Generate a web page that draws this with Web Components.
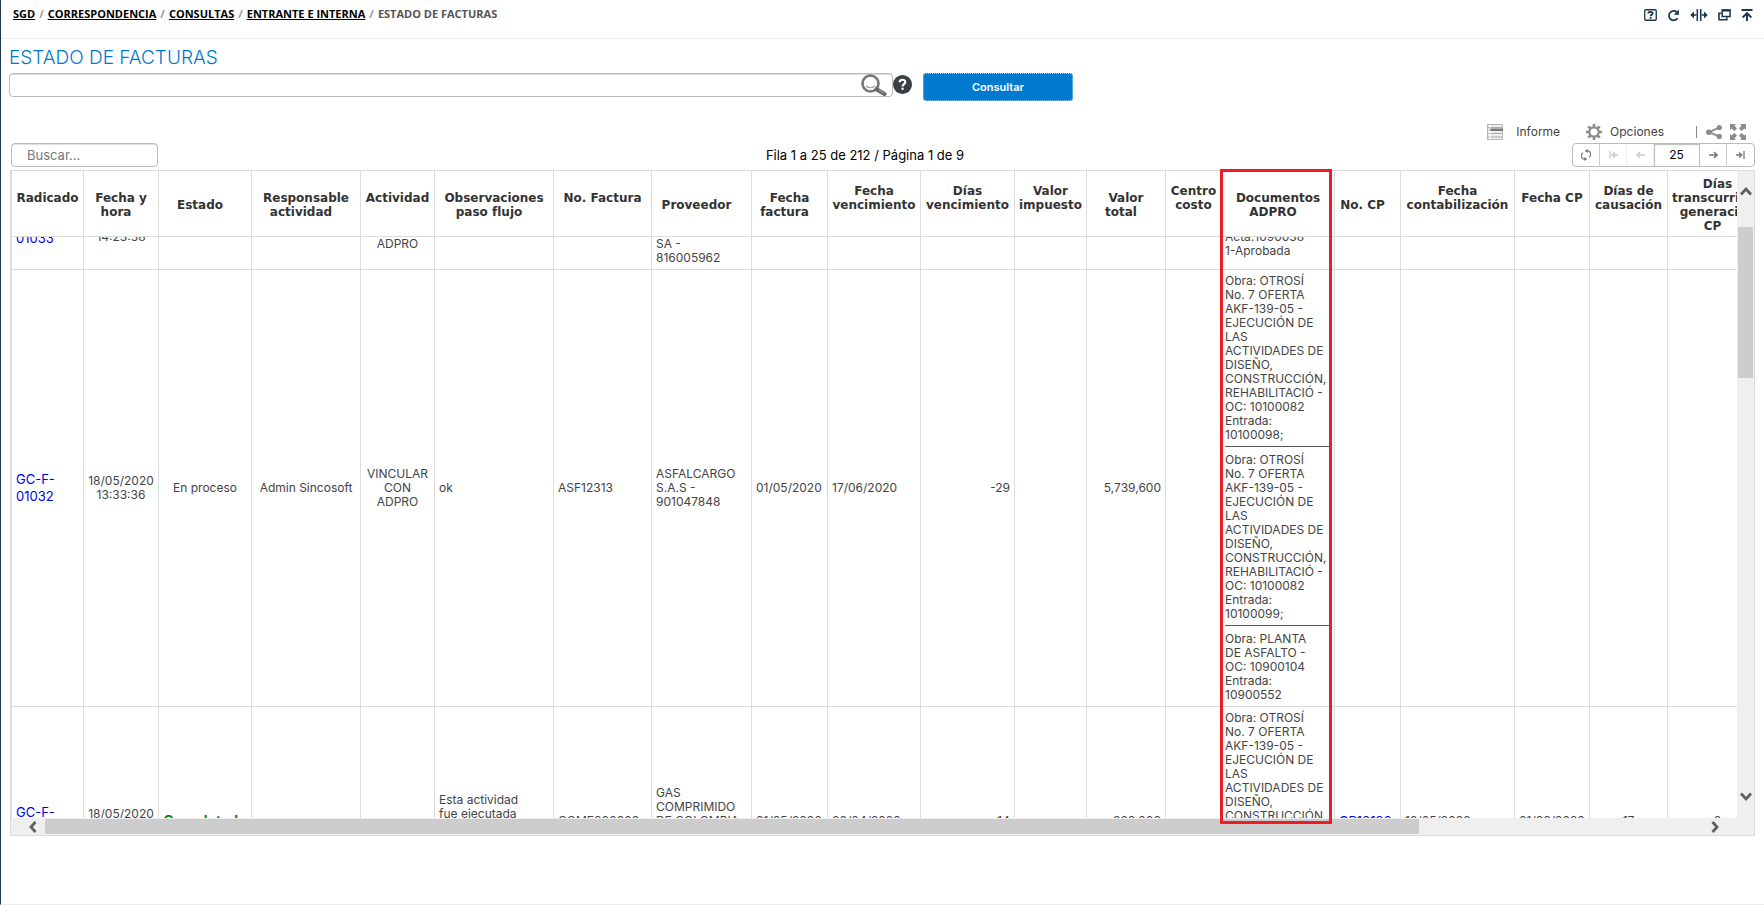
<!DOCTYPE html>
<html lang="es">
<head>
<meta charset="utf-8">
<title>Estado de facturas</title>
<style>
  body { margin: 0; background: #fff; color: #444; font: 12px/14px Inter, "Liberation Sans", sans-serif; }
</style>
</head>
<body>
<sgd-page>
  <sgd-topbar slot="top">
    <a href="#sgd">SGD</a>
    <a href="#correspondencia">CORRESPONDENCIA</a>
    <a href="#consultas">CONSULTAS</a>
    <a href="#entrante">ENTRANTE E INTERNA</a>
    <span>ESTADO DE FACTURAS</span>
  </sgd-topbar>
  <sgd-query>ESTADO DE FACTURAS</sgd-query>
  <sgd-report-tools></sgd-report-tools>
  <sgd-pager>Fila 1 a 25 de 212 / Página 1 de 9</sgd-pager>
  <sgd-grid></sgd-grid>
</sgd-page>

<script>
const ICONS = {
  ask: [13, 12, '<rect x=".75" y=".75" width="11.5" height="10.5" rx="1" fill="none" stroke="currentColor" stroke-width="1.3"/><path d="M4.2 4.5C4.3 2.4 8.7 2.4 8.7 4.4 8.7 5.7 6.5 5.7 6.5 7.2" fill="none" stroke="currentColor" stroke-width="1.7"/><path d="M5.6 8h1.9v1.7H5.6z"/>'],
  reload: [13, 13, '<path d="M10.6 9.2A4.7 4.7 0 1 1 9.7 3" fill="none" stroke="currentColor" stroke-width="1.8"/><path d="M11.9.6v5.1H6.8z"/>'],
  split: [18, 12, '<path d="M7.3 0v12M10.7 0v12" stroke="currentColor" stroke-width="1.5"/><path d="M6.5 5.2H4V2.6L.3 6 4 9.4V6.8h2.5zM11.5 5.2H14V2.6L17.7 6 14 9.4V6.8h-2.5z"/>'],
  windows: [13, 12, '<path d="M4.2 1h7.9v6.5H4.2z" fill="none" stroke="currentColor" stroke-width="1.5"/><path d="M4.2.3h8v2.200h-8z"/><path d="M3.5 4.2H1v6.6h7.8V8.2" fill="none" stroke="currentColor" stroke-width="1.6"/>'],
  top: [12, 12, '<path d="M.5 0h11v2H.5z"/><path d="M6 12V5M1.7 8.5 6 4.2l4.3 4.3" fill="none" stroke="currentColor" stroke-width="1.9"/>'],
  lens: [26, 22, '<circle cx="9.5" cy="9.5" r="8" fill="#fff" stroke="#777" stroke-width="2.6"/><path d="M5 12q4.500 3.500 9 0" fill="none" stroke="#999" stroke-width="1.2"/><path d="M15.500 15.200 23.500 20" stroke="#666" stroke-width="4" stroke-linecap="round"/><path d="M18 16.300l5 3" stroke="#aaa" stroke-width="1"/>'],
  help: [19, 19, '<circle cx="9.5" cy="9.5" r="9.500" fill="#3a3f42"/><path d="M6.600 7.300C6.700 3.800 12.400 4 12.300 7.100 12.300 9.100 9.600 9.100 9.600 11.500" fill="none" stroke="#fff" stroke-width="2.200"/><path d="M8.500 12.700h2.200v2.100H8.500z" fill="#fff"/>'],
  report: [16, 16, '<path d="M.5.5h15v15H.5z" fill="#eee" stroke="#b5b5b5"/><path d="M2 4.500h14v2.500H2z" fill="#777"/><path d="M1 3.500h14M1 9.500h14M1 13h14" stroke="#aaa"/><path d="M3 1v14" stroke="#fff"/>'],
  gear: [16, 16, '<circle cx="8" cy="8" r="4.700" fill="none" stroke="currentColor" stroke-width="2.200"/><path d="M8 0v3M8 13v3M0 8h3M13 8h3M2.300 2.300l2.200 2.200M11.500 11.500l2.200 2.200M2.300 13.700l2.200-2.200M11.500 4.500l2.200-2.200" stroke="currentColor" stroke-width="2.600"/>'],
  share: [16, 14, '<path d="M13 2.700 3 7.200l10 4.200" fill="none" stroke="currentColor" stroke-width="2"/><circle cx="2.800" cy="7.200" r="2.800"/><circle cx="13.300" cy="2.600" r="2.600"/><circle cx="13.300" cy="11.400" r="2.600"/>'],
  expand: [16, 16, '<path d="M0 0h6L4.500 1.500 7 4.500 4.500 7 1.500 4.500 0 6zM16 0v6l-1.500-1.500L11.500 7 9 4.500l2.500-3L10 0zM0 16v-6l1.500 1.500L4.500 9 7 11.500l-2.500 3L6 16zM16 16h-6l1.500-1.500-2.500-3L11.500 9l3 2.500L16 10z"/>'],
  sync: [10, 12, '<path d="M3.800 10.200H4.500A3.500 3.500 0 0 1 2 3.800M6.200 1.800H5.500A3.500 3.500 0 0 1 8 8.200" fill="none" stroke="currentColor" stroke-width="1.200"/><path d="M6.700 0 3.700 2l3 2zM3.300 8l3 2-3 2z"/>'],
  first: [9, 8, '<path d="M1 0v8" stroke="currentColor" stroke-width="1.300"/><path d="M9 4H3.500M6 1.500 3.300 4 6 6.500" fill="none" stroke="currentColor" stroke-width="1.500"/>'],
  prev: [9, 8, '<path d="M9 4H1.500M4 1 1 4l3 3" fill="none" stroke="currentColor" stroke-width="1.500"/>'],
  next: [9, 8, '<path d="M0 4h7.500M5 1l3 3-3 3" fill="none" stroke="currentColor" stroke-width="1.600"/>'],
  last: [9, 8, '<path d="M8 0v8" stroke="currentColor" stroke-width="1.300"/><path d="M0 4h5.500M3 1.500 5.700 4 3 6.500" fill="none" stroke="currentColor" stroke-width="1.500"/>'],
  up: [12, 10, '<path d="M1 8.500 6 3l5 5.500" fill="none" stroke="currentColor" stroke-width="2.800"/>'],
  down: [12, 10, '<path d="M1 1.500 6 7l5-5.500" fill="none" stroke="currentColor" stroke-width="2.800"/>'],
  left: [9, 12, '<path d="M7.500 1 3 6l4.500 5" fill="none" stroke="currentColor" stroke-width="2.800"/>'],
  right: [9, 12, '<path d="M1.500 1 6 6l-4.500 5" fill="none" stroke="currentColor" stroke-width="2.800"/>']
};
const icon = name => {
  const [w, h, body] = ICONS[name];
  return `<svg width="${w}" height="${h}" viewBox="0 0 ${w} ${h}" fill="currentColor" aria-hidden="true">${body}</svg>`;
};
const BASE = `<style>
  *, *::before, *::after { box-sizing: border-box; }
  button, input { font: inherit; color: inherit; margin: 0; }
  button { display: flex; align-items: center; justify-content: center; padding: 0; border: 0; background: none; cursor: pointer; }
  svg { display: block; flex: none; }
</style>`;
class Base extends HTMLElement {
  constructor() {
    super();
    this.attachShadow({ mode: 'open' }).innerHTML = BASE + this.view();
  }
}

customElements.define('sgd-page', class extends Base {
  view() { return `<style>
    :host { display: flex; flex-direction: column; box-sizing: border-box; min-height: 100vh; border-left: 1px solid #1c3550; border-bottom: 1px solid #ececec; }
    main { padding: 8px 8px 0 8px; }
  </style>
  <slot name="top"></slot><main><slot></slot></main>`; }
});

customElements.define('sgd-topbar', class extends Base {
  view() { return `<style>
    :host { display: flex; justify-content: space-between; align-items: flex-start; box-sizing: border-box; height: 39px; padding: 6px 11px 0 12px; border-bottom: 1px solid #ececec; }
    nav { display: flex; gap: 4px; font: bold 11px/16px "Open Sans", "Noto Sans", sans-serif; color: #999; white-space: nowrap; }
    ::slotted(a) { color: #000; }
    ::slotted(span) { color: #555; }
    .icons { display: flex; align-items: center; gap: 10px; height: 18px; color: #1c3550; }
  </style>
  <nav aria-label="Ruta"></nav>
  <div class="icons">
    <button aria-label="Ayuda">${icon('ask')}</button>
    <button aria-label="Actualizar">${icon('reload')}</button>
    <button aria-label="Ampliar">${icon('split')}</button>
    <button aria-label="Nueva ventana">${icon('windows')}</button>
    <button aria-label="Subir">${icon('top')}</button>
  </div>`; }
  connectedCallback() {
    const nav = this.shadowRoot.querySelector('nav');
    [...this.children].forEach((el, i) => {
      el.slot = 'step' + i;
      nav.insertAdjacentHTML('beforeend', `${i ? '<span>/</span>' : ''}<slot name="step${i}"></slot>`);
    });
  }
});

customElements.define('sgd-query', class extends Base {
  view() { return `<style>
    :host { display: block; }
    h1 { margin: 0 0 4px; font-size: 19px; font-weight: 300; line-height: 22px; color: #007acc; }
    form { display: flex; align-items: flex-start; }
    .field { position: relative; flex: 0 1 884px; }
    input { display: block; width: 100%; height: 24px; padding: 0 36px 0 8px; border: 1px solid #bbb; border-radius: 4px; box-shadow: inset 0 1px 1px #ddd; background: #fff; }
    .lens { position: absolute; right: 6px; top: 1px; }
    .help { margin: 2px 11px 0 0; }
    .go { width: 150px; height: 28px; border: 1px dotted #9fd0f2; border-radius: 3px; background: #007acf; color: #fff; font-size: 11px; font-weight: 600; }
  </style>
  <h1><slot></slot></h1>
  <form onsubmit="return false">
    <div class="field"><input type="text" aria-label="Criterios de consulta"><button type="button" class="lens" aria-label="Buscar">${icon('lens')}</button></div>
    <button type="button" class="help" aria-label="Ayuda">${icon('help')}</button>
    <button class="go">Consultar</button>
  </form>`; }
});

customElements.define('sgd-report-tools', class extends Base {
  view() { return `<style>
    :host { display: flex; justify-content: flex-end; align-items: center; height: 16px; margin: 23px 10px 3px 0; color: #8c8c8c; }
    button span { color: #444; }
    .report { gap: 13px; margin-right: 26px; }
    .options { gap: 8px; margin-right: 32px; }
    i { width: 1px; height: 12px; background: #888; margin-right: 9px; }
    .share { margin-right: 8px; }
  </style>
  <button class="report">${icon('report')}<span>Informe</span></button>
  <button class="options">${icon('gear')}<span>Opciones</span></button>
  <i></i>
  <button class="share" aria-label="Compartir">${icon('share')}</button>
  <button aria-label="Pantalla completa">${icon('expand')}</button>`; }
});

customElements.define('sgd-pager', class extends Base {
  view() { return `<style>
    :host { display: flex; justify-content: space-between; align-items: center; margin: 0 1px 3px 2px; color: #000; font-size: 13px; }
    .search { width: 147px; height: 24px; padding: 0 15px; border: 1px solid #bbb; border-radius: 4px; box-shadow: inset 0 1px 1px #ddd; }
    .search::placeholder { color: #777; opacity: 1; }
    .pages { display: flex; height: 24px; border: 1px solid #bbb; border-radius: 4px; color: #777; overflow: hidden; }
    button { width: 27px; border-right: 1px solid #ccc; }
    button:last-child { border-right: 0; }
    button:disabled { color: #ccc; border-color: #eee; }
    .size { width: 46px; padding: 0; border: 1px solid #bbb; border-width: 0 1px 0 0; box-shadow: inset 1px 1px 1px #bbb; text-align: center; color: #000; font-size: 12px; }
  </style>
  <input class="search" type="text" placeholder="Buscar..." aria-label="Buscar en la tabla">
  <span><slot></slot></span>
  <div class="pages">
    <button aria-label="Refrescar">${icon('sync')}</button>
    <button disabled aria-label="Primera página">${icon('first')}</button>
    <button disabled aria-label="Página anterior">${icon('prev')}</button>
    <input class="size" type="text" value="25" aria-label="Filas por página">
    <button aria-label="Página siguiente">${icon('next')}</button>
    <button aria-label="Última página">${icon('last')}</button>
  </div>`; }
});

/* title, width, cell alignment, whether the sort mark drops to its own line */
const COLUMNS = [
  ['Radicado', 73, 'left', 1], ['Fecha y<br>hora', 75, 'center'], ['Estado', 93, 'center'],
  ['Responsable<br>actividad', 109, 'center'], ['Actividad', 74, 'center', 1],
  ['Observaciones<br>paso flujo', 119, 'left'], ['No. Factura', 98, 'left', 1], ['Proveedor', 100, 'left'],
  ['Fecha<br>factura', 76, 'left'], ['Fecha<br>vencimiento', 93, 'left', 1], ['Días<br>vencimiento', 94, 'right', 1],
  ['Valor<br>impuesto', 72, 'right', 1], ['Valor<br>total', 79, 'right'], ['Centro<br>costo', 56, 'left', 1],
  ['Documentos<br>ADPRO', 113, 'left'], ['No. CP', 66, 'left'], ['Fecha<br>contabilización', 114, 'left', 1],
  ['Fecha CP', 75, 'left', 1], ['Días de<br>causación', 78, 'center', 1], ['Días<br>transcurridos<br>generación<br>CP', 100, 'center']
];
const work = entry => 'Obra: OTROSÍ<br>No. 7 OFERTA<br>AKF-139-05 -<br>EJECUCIÓN DE<br>LAS<br>ACTIVIDADES DE<br>DISEÑO,<br>CONSTRUCCIÓN,<br>REHABILITACIÓ -<br>OC: 10100082' + (entry ? '<br>Entrada:<br>' + entry : '');
const ROWS = [
  { height: 79, cells: ['<br><a href="#1033">01033</a>', '<br>14:23:38', '', '', '<br><br>ADPRO', '', '', '<br><br><br>SA -<br>816005962', '', '', '', '', '', '', '<br><br>Acta:1090038 -<br>1-Aprobada', '', '', '', '', ''] },
  { height: 437, cells: ['<a href="#1032">GC-F-<br>01032</a>', '18/05/2020<br>13:33:36', 'En proceso', 'Admin Sincosoft', 'VINCULAR<br>CON<br>ADPRO', 'ok', 'ASF12313', 'ASFALCARGO<br>S.A.S -<br>901047848', '01/05/2020', '17/06/2020', '-29', '', '5,739,600', '', work('10100098;') + '<hr>' + work('10100099;') + '<hr>Obra: PLANTA<br>DE ASFALTO -<br>OC: 10900104<br>Entrada:<br>10900552', '', '', '', '', ''] },
  { height: 229, top: 1, cells: ['<a href="#1031">GC-F-<br>01031</a>', '18/05/2020<br>12:10:05', '<b>Completado</b>', '', '', 'Esta actividad<br>fue ejecutada<br>por el<br>sistema', 'COME000002', 'GAS<br>COMPRIMIDO<br>DE COLOMBIA<br>SA -<br>800200300', '01/05/2020', '30/04/2020', '14', '', '330,000', '', work(), '<a class="cp" href="#cp">CP10192</a>', '18/05/2020', '01/06/2020', '17', '0'] }
];

customElements.define('sgd-grid', class extends Base {
  view() {
    const head = COLUMNS.map(c => `<th scope="col"${c[3] ? ' class="drop"' : ''}>${c[0]}</th>`).join('');
    const body = ROWS.map(r => `<tr style="height:${r.height}px"${r.top ? ' class="top"' : ''}>${r.cells.map((t, i) => `<td class="${COLUMNS[i][2]}${i === 14 ? ' docs' : ''}">${t}</td>`).join('')}</tr>`).join('');
    return `<style>
      :host { display: grid; grid-template-columns: minmax(0, 1fr) 17px; position: relative; margin: 0 1px 0 1px; border: 1px solid #dcdcdc; background: #efefef; }
      .view { height: calc(100vh - 258px); overflow: hidden; background: #fff; }
      table { table-layout: fixed; width: 1757px; border-collapse: separate; border-spacing: 0; }
      th, td { border: 1px solid #dcdcdc; border-width: 0 1px 1px 0; }
      th:first-child, td:first-child { border-left-width: 1px; }
      th { position: sticky; top: 0; z-index: 1; height: 66px; padding: 3px 1px 0; background: #fff; color: #333; font: bold 12px/14px "DejaVu Sans", sans-serif; text-align: center; white-space: nowrap; }
      th::after { content: ""; display: inline-block; width: 10px; }
      th.drop::after { display: block; height: 14px; }
      td { padding: 4px; white-space: nowrap; }
      .center { text-align: center; } .right { text-align: right; }
      .docs { padding: 4px 3px; }
      .top .docs { vertical-align: top; }
      td a { color: #00e; text-decoration: none; font-size: 13px; line-height: 16px; }
      td:first-child { line-height: 16px; }
      td b { color: #0a850a; font-size: 14px; }
      hr { margin: 4px 0 6px; border: 0; height: 1px; background: #555; }
      .bar { display: flex; align-items: center; color: #606060; }
      .bar.v { flex-direction: column; padding: 15px 1px 16px; }
      .bar.h { padding: 1px 17px; height: 17px; }
      .bar button { flex: none; }
      .v .track { flex: 1; width: 100%; margin: 31px 0 6px; }
      .v .thumb { height: 27%; background: #cdcdcd; }
      .h .track { flex: 1; height: 15px; margin: 0 10px 0 8px; }
      .h .thumb { height: 15px; width: 83%; background: #cdcdcd; }
      .mark { position: absolute; left: 1209px; top: -2px; bottom: 11px; width: 112px; border: 3px solid #ee1c24; z-index: 2; pointer-events: none; }
    </style>
    <div class="view"><table>
      <colgroup>${COLUMNS.map(c => `<col style="width:${c[1]}px">`).join('')}</colgroup>
      <thead><tr>${head}</tr></thead><tbody>${body}</tbody>
    </table></div>
    <div class="bar v"><button aria-label="Subir">${icon('up')}</button><div class="track"><div class="thumb"></div></div><button aria-label="Bajar">${icon('down')}</button></div>
    <div class="bar h"><button aria-label="Izquierda">${icon('left')}</button><div class="track"><div class="thumb"></div></div><button aria-label="Derecha">${icon('right')}</button></div>
    <div class="mark"></div>`;
  }
  connectedCallback() {
    const view = this.shadowRoot.querySelector('.view');
    view.scrollTop = 46;
    const [up, down, left, right] = this.shadowRoot.querySelectorAll('.bar button');
    up.onclick = () => view.scrollBy(0, -40);
    down.onclick = () => view.scrollBy(0, 40);
    left.onclick = () => view.scrollBy(-40, 0);
    right.onclick = () => view.scrollBy(40, 0);
  }
});
</script>
</body>
</html>
